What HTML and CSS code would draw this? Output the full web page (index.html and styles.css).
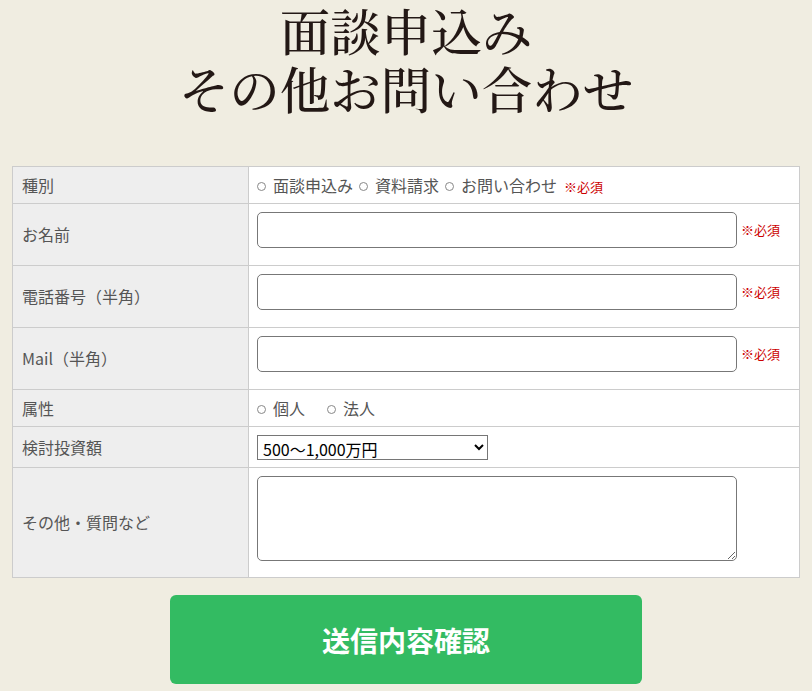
FILE: index.html
```html
<!DOCTYPE html>
<html lang="ja">
<head>
<meta charset="utf-8">
<title>面談申込み その他お問い合わせ</title>
<link rel="stylesheet" href="styles.css">
</head>
<body>
<div class="page">
  <h1 class="title">面談申込み<br>その他お問い合わせ</h1>
  <form class="form">
    <table class="form-table">
      <tr class="row-compact">
        <th>種別</th>
        <td>
          <span class="choices">
            <label class="choice"><span class="dot"></span>面談申込み</label>
            <label class="choice"><span class="dot"></span>資料請求</label>
            <label class="choice"><span class="dot"></span>お問い合わせ</label>
            <span class="req req-small">※必須</span>
          </span>
        </td>
      </tr>
      <tr>
        <th>お名前</th>
        <td class="field-cell"><div class="field-line"><input class="text-input" type="text"><span class="req">※必須</span></div></td>
      </tr>
      <tr>
        <th>電話番号（半角）</th>
        <td class="field-cell"><div class="field-line"><input class="text-input" type="text"><span class="req">※必須</span></div></td>
      </tr>
      <tr>
        <th>Mail（半角）</th>
        <td class="field-cell"><div class="field-line"><input class="text-input" type="text"><span class="req">※必須</span></div></td>
      </tr>
      <tr class="row-compact">
        <th>属性</th>
        <td>
          <span class="choices wide">
            <label class="choice"><span class="dot"></span>個人</label>
            <label class="choice"><span class="dot"></span>法人</label>
          </span>
        </td>
      </tr>
      <tr>
        <th>検討投資額</th>
        <td class="select-cell">
          <select class="amount">
            <option>500〜1,000万円</option>
          </select>
        </td>
      </tr>
      <tr>
        <th>その他・質問など</th>
        <td class="area-cell"><textarea class="area"></textarea></td>
      </tr>
    </table>
    <div class="actions">
      <button type="button" class="submit">送信内容確認</button>
    </div>
  </form>
</div>
</body>
</html>
```

FILE: styles.css
```css
html, body {
  margin: 0;
  padding: 0;
  background: #f0ede1;
}

.page {
  padding: 0 12px;
  font-family: "Noto Sans CJK JP", "Noto Sans", sans-serif;
}

.title {
  margin: 0 0 50px;
  padding-top: 0;
  text-align: center;
  font-family: "Noto Serif CJK JP", "Liberation Serif", "Noto Sans CJK JP", serif;
  font-weight: 500;
  font-size: 50.5px;
  line-height: 58px;
  color: #231815;
}

.form-table {
  width: 100%;
  table-layout: fixed;
  border-collapse: collapse;
  background: #fff;
}

.form-table th,
.form-table td {
  border: 1px solid #cccccc;
  font-size: 16px;
  line-height: 21px;
  vertical-align: middle;
}

.form-table th {
  width: 217px;
  background: #eeeeee;
  color: #555555;
  font-weight: normal;
  text-align: left;
  padding: 8px 9px;
}

.form-table td {
  padding: 8px 8px;
  color: #555555;
}

.row-compact th,
.row-compact td {
  padding-top: 8px;
  padding-bottom: 7px;
}

.choices {
  display: flex;
  align-items: center;
  height: 21px;
  gap: 6px;
}

.choices.wide {
  gap: 22px;
}

.choice {
  display: inline-flex;
  align-items: center;
  height: 21px;
  gap: 7px;
}

.dot {
  display: inline-block;
  width: 7px;
  height: 7px;
  border: 1px solid #888;
  border-radius: 50%;
  margin-top: 1px;
}

.req {
  color: #cc0000;
  font-size: 13px;
  line-height: 16px;
  margin-left: 4px;
}

.req-small {
  margin-left: 1px;
  padding-top: 2px;
}

.field-cell {
  padding-bottom: 17px !important;
}

.field-line {
  display: flex;
  align-items: center;
}

.text-input {
  box-sizing: border-box;
  width: 480px;
  height: 36px;
  border: 1px solid #777;
  border-radius: 5px;
  background: #fff;
  margin: 0;
}

.select-cell {
  padding-bottom: 7px !important;
}

.amount {
  display: block;
  box-sizing: border-box;
  width: 231px;
  height: 25px;
  font-family: "Noto Sans CJK JP", "Noto Sans", sans-serif;
  font-size: 16px;
  color: #000;
  border: 1px solid #767676;
  border-radius: 0;
  background: #fff;
  margin: 0;
  padding: 0 1px;
}

.area-cell {
  padding-bottom: 16px !important;
}

.area {
  display: block;
  box-sizing: border-box;
  width: 480px;
  height: 85px;
  border: 1px solid #777;
  border-radius: 5px;
  background: #fff;
  margin: 0;
}

.actions {
  display: flex;
  justify-content: center;
  padding-top: 17px;
}

.submit {
  width: 472px;
  height: 89px;
  border: none;
  border-radius: 6px;
  background: #33bb62;
  color: #fff;
  font-family: "Noto Sans CJK JP", "Noto Sans", sans-serif;
  font-size: 28px;
  font-weight: bold;
}
```
